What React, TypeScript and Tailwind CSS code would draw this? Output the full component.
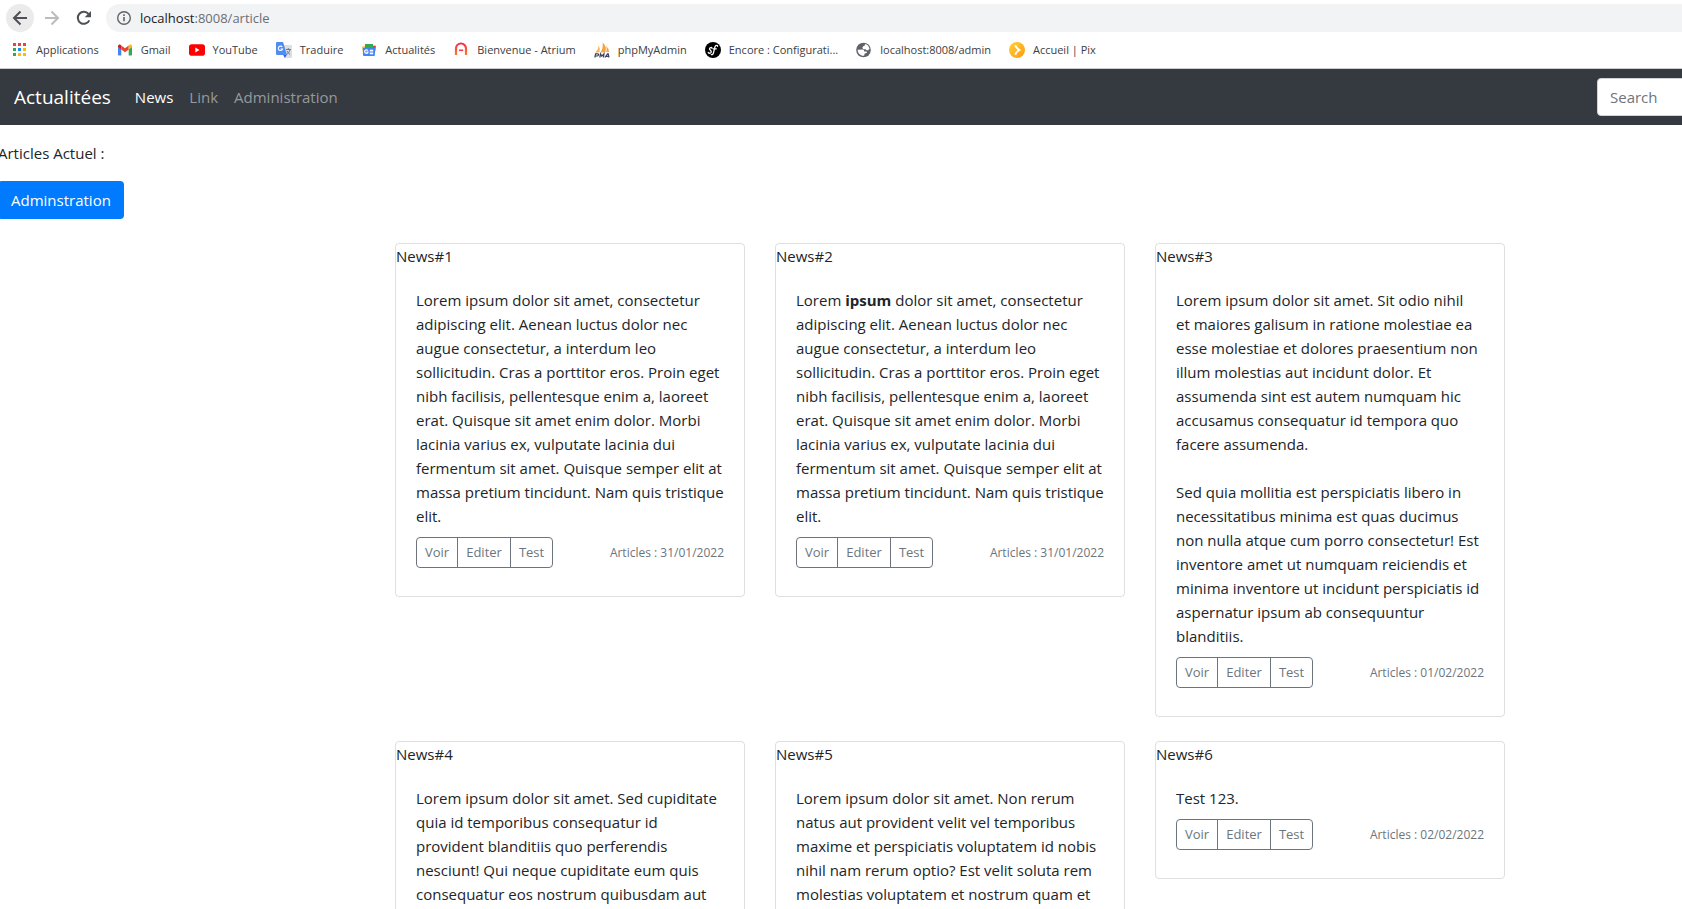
import React from 'react';

const AppsIcon = () => (
  <svg width="16" height="16" viewBox="0 0 16 16" aria-hidden="true" shapeRendering="crispEdges">
    <path fill="#ea4335" d="M1 1h3v3H1zM6 1h3v3H6zM11 1h3v3h-3z" />
    <path fill="#34a853" d="M1 6h3v3H1z" />
    <path fill="#1a8cf0" d="M6 6h3v3H6z" />
    <path fill="#fbbc04" d="M11 6h3v3h-3zM11 11h3v3h-3zM6 11h3v3H6z" />
    <path fill="#34a853" d="M1 11h3v3H1z" />
  </svg>
);

const GmailIcon = () => (
  <svg width="16" height="16" viewBox="0 0 16 16" aria-hidden="true">
    <path fill="#4285f4" d="M1 4.5v8.2q0 .8.8.8h2.5V7.2L1 4.8z" />
    <path fill="#34a853" d="M11.7 13.500h2.500q.8 0 .8-.8V4.800l-3.300 2.400z" />
    <path fill="#ea4335" d="M4.300 3.500 8 6.300l3.700-2.800v3.900L8 10.200 4.300 7.400z" />
    <path fill="#c5221f" d="M1 4.200c0-1.600 1.700-2 2.700-1.200l.6.500v3.900L1 5z" />
    <path fill="#fbbc04" d="M15 4.200c0-1.600-1.700-2-2.700-1.200l-.6.500v3.900L15 5z" />
  </svg>
);

const YouTubeIcon = () => (
  <svg width="16" height="16" viewBox="0 0 16 16" aria-hidden="true">
    <rect y="2.300" width="16" height="11.400" rx="2.800" fill="#f00" />
    <path d="M6.300 5.600v4.800L10.500 8z" fill="#fff" />
  </svg>
);

const TranslateIcon = () => (
  <svg width="16" height="16" viewBox="0 0 16 16" aria-hidden="true">
    <path fill="#dcdfe3" d="M6 3h9q1 0 1 1v11q0 1-1 1H9z" />
    <path fill="#3c5fc9" d="M7 12.500h4L8.800 16z" />
    <path fill="#4f8df5" d="M1 0h6l4 13H1q-1 0-1-1V1q0-1 1-1z" />
    <path fill="none" stroke="#fff" strokeWidth="1.100" d="M6.300 5A2.200 2.200 0 1 0 6.600 7H4.600" />
    <path fill="none" stroke="#6b7c8c" strokeWidth="1" d="M10 7.500h5M12.300 6v1.500M14 7.500c-.5 2.500-2 4-3 4.800M11 9c.8 1.600 2 2.800 3.200 3.600" />
  </svg>
);

const NewsIcon = () => (
  <svg width="16" height="16" viewBox="0 0 16 16" aria-hidden="true">
    <path fill="#fbbc04" d="M1 4.800 9 3l2 4-9 3z" />
    <path fill="#ea4335" d="m10 4 4-.6 1 .8-.8 5.300z" />
    <path fill="#34a853" d="M4 2h8v4H4z" />
    <path fill="#4285f4" d="M1.800 6h12.400l-.3 7q0 1-1 1H3q-1 0-1-1z" />
    <path fill="none" stroke="#fff" strokeWidth="1.200" d="M6.800 8.700a1.700 1.700 0 1 0 .2 1.500H5.500M8.800 8.400h3.400M8.800 10h3.400M8.800 11.600h3.400" />
  </svg>
);

const AtriumIcon = () => (
  <svg width="16" height="16" viewBox="0 0 16 16" aria-hidden="true">
    <defs>
      <linearGradient id="atrium" x1="0" y1="0" x2="0" y2="1">
        <stop offset="0" stopColor="#f0304c" />
        <stop offset="1" stopColor="#ff7a2e" />
      </linearGradient>
    </defs>
    <path fill="none" stroke="url(#atrium)" strokeWidth="2.200" d="M3 13V6.500A5 5 0 0 1 13 6.500V13" />
    <path stroke="#f4434a" strokeWidth="1.700" d="M6 8.300h4.200" />
  </svg>
);

const PmaIcon = () => (
  <svg width="16" height="16" viewBox="0 0 16 16" aria-hidden="true">
    <path fill="#f9a13a" d="M8.500.5Q13 4 11.500 10.300L6.500 10.500Q9.500 6 8.500.5z" />
    <path fill="#f7b560" d="M4.800 3.500Q6.500 7 5.500 10.300L1.200 10.700Q4.500 7.500 4.800 3.500z" />
    <path fill="#f9a13a" d="M12.300 4Q15 6.500 15 10h-2.700q.8-3 0-6z" />
    <path fill="none" stroke="#3f3f63" strokeWidth="1.200" d="M.8 15.500l.8-3.700h2.200q1 0 .8 1T3.200 14H1.300M5.800 15.500l.8-3.700 1.200 2.400 2.200-2.400-.5 3.700M11 15.500l2.500-3.700h.7l.8 3.700M12.200 14.300h2.500" />
  </svg>
);

const SymfonyIcon = () => (
  <svg width="16" height="16" viewBox="0 0 16 16" aria-hidden="true">
    <circle cx="8" cy="8" r="8" fill="#000" />
    <path fill="none" stroke="#fff" strokeWidth="1.300" strokeLinecap="round" d="M7 6.300C7 5 4.300 5.300 4.500 7c.2 1.300 2.300 1.500 1.700 3.200C5.700 11.500 3.300 11.700 3.200 10.300M12.600 4.300c0-1.400-2-1.200-2.600.4-.7 2-1 4.600-1.600 6.300-.4 1.300-1.200 1.900-2 1.600M8.300 6.800h3" />
  </svg>
);

const GlobeIcon = () => (
  <svg width="16" height="16" viewBox="0 0 16 16" aria-hidden="true">
    <circle cx="7.500" cy="8" r="7.300" fill="#5f6368" />
    <path fill="#fff" d="M9 2.100c2.300.5 4 2.200 4.500 4.700l-1.300 1.500h-1.600L9.500 7.200H7.200L6.300 5.500l1-1.300 1.500-.6zM1.600 7.800l4.700-.2c1.300 0 1.900.8 1.900 1.800h2c1 0 1 1.300.2 1.600l-1.700.5-.6 2.300c-3.500.4-6.300-2.300-6.500-6z" />
  </svg>
);

const PixIcon = () => (
  <svg width="16" height="16" viewBox="0 0 16 16" aria-hidden="true">
    <defs>
      <linearGradient id="pix" x1="0" y1="0" x2="1" y2="1">
        <stop offset="0" stopColor="#ffd13a" />
        <stop offset="1" stopColor="#ff9a0c" />
      </linearGradient>
    </defs>
    <circle cx="8" cy="8" r="8" fill="url(#pix)" />
    <path fill="none" stroke="#fff" strokeWidth="2" d="M6.300 3.300q1 3 4 4.700-3 1.700-4 4.700" />
  </svg>
);

const bookmarks = [
  { label: 'Applications', Icon: AppsIcon },
  { label: 'Gmail', Icon: GmailIcon },
  { label: 'YouTube', Icon: YouTubeIcon },
  { label: 'Traduire', Icon: TranslateIcon },
  { label: 'Actualités', Icon: NewsIcon },
  { label: 'Bienvenue - Atrium', Icon: AtriumIcon },
  { label: 'phpMyAdmin', Icon: PmaIcon },
  { label: 'Encore : Configurati...', Icon: SymfonyIcon },
  { label: 'localhost:8008/admin', Icon: GlobeIcon },
  { label: 'Accueil | Pix', Icon: PixIcon },
];

function BrowserBar() {
  return (
    <header className="border-b border-[#c9cbcf] bg-white">
      <div className="flex items-center pt-1 pl-1.5">
        <button aria-label="Retour" className="flex size-7 items-center justify-center rounded-full bg-[#ebebec]">
          <svg width="16" height="16" viewBox="0 0 16 16" fill="none" stroke="#4d5156" strokeWidth="2" aria-hidden="true">
            <path d="M15 8H2.500M8.500 1.500 2 8l6.500 6.500" />
          </svg>
        </button>
        <button aria-label="Avancer" className="ml-1 flex size-7 items-center justify-center">
          <svg width="16" height="16" viewBox="0 0 16 16" fill="none" stroke="#babcbe" strokeWidth="2" aria-hidden="true">
            <path d="M1 8h12.500M7.500 1.500 14 8l-6.500 6.500" />
          </svg>
        </button>
        <button aria-label="Actualiser" className="ml-1 flex size-7 items-center justify-center">
          <svg width="16" height="16" viewBox="0 0 16 16" aria-hidden="true">
            <path fill="none" stroke="#4d5156" strokeWidth="2" d="M13.300 10.300A6 6 0 1 1 12.500 4" />
            <path fill="#4d5156" d="M15 1v6.300H8.700z" />
          </svg>
        </button>
        <div className="ml-2 flex h-7 grow items-center rounded-l-full bg-[#f1f3f4] pl-2.5">
          <svg width="16" height="16" viewBox="0 0 16 16" fill="none" stroke="#5f6368" aria-hidden="true">
            <circle cx="8" cy="8" r="6.300" strokeWidth="1.400" />
            <path strokeWidth="1.600" d="M8 7v4.300M8 4.300v1.600" />
          </svg>
          <a href="#" className="ml-2 text-[13px] leading-5 text-[#6b6f74]">
            <span className="text-[#202124]">localhost</span>:8008/article
          </a>
        </div>
      </div>
      <nav aria-label="Favoris" className="flex h-9 items-center gap-[18px] pl-3">
        {bookmarks.map(({ label, Icon }) => (
          <a key={label} href="#" className="flex shrink-0 items-center gap-2 text-[11px] leading-4 text-[#3c4043]">
            <Icon />
            {label}
          </a>
        ))}
      </nav>
    </header>
  );
}

function Navbar() {
  return (
    <nav className="flex h-14 items-center overflow-hidden bg-[#343a40] pl-3.5 text-[15px]">
      <a href="#" className="text-[19px] leading-8 text-white">Actualitées</a>
      <div className="ml-6 flex gap-4">
        <a href="#" className="text-white">News</a>
        <a href="#" className="text-[#96999c]">Link</a>
        <a href="#" className="text-[#96999c]">Administration</a>
      </div>
      <form className="-mr-32 ml-auto">
        <input
          type="search"
          aria-label="Search"
          placeholder="Search"
          className="h-[38px] w-[213px] rounded border border-[#ced4da] bg-white px-3 placeholder:text-[#6c757d]"
        />
      </form>
    </nav>
  );
}

const articles: { id: number; date: string; body: React.ReactNode }[] = [
  {
    id: 1,
    date: '31/01/2022',
    body: 'Lorem ipsum dolor sit amet, consectetur adipiscing elit. Aenean luctus dolor nec augue consectetur, a interdum leo sollicitudin. Cras a porttitor eros. Proin eget nibh facilisis, pellentesque enim a, laoreet erat. Quisque sit amet enim dolor. Morbi lacinia varius ex, vulputate lacinia dui fermentum sit amet. Quisque semper elit at massa pretium tincidunt. Nam quis tristique elit.',
  },
  {
    id: 2,
    date: '31/01/2022',
    body: (
      <>
        Lorem <strong>ipsum</strong> dolor sit amet, consectetur adipiscing elit. Aenean luctus dolor nec augue
        consectetur, a interdum leo sollicitudin. Cras a porttitor eros. Proin eget nibh facilisis, pellentesque enim
        a, laoreet erat. Quisque sit amet enim dolor. Morbi lacinia varius ex, vulputate lacinia dui fermentum sit
        amet. Quisque semper elit at massa pretium tincidunt. Nam quis tristique elit.
      </>
    ),
  },
  {
    id: 3,
    date: '01/02/2022',
    body: (
      <>
        Lorem ipsum dolor sit amet. Sit odio nihil et&nbsp;maiores galisum in ratione molestiae ea esse molestiae et
        dolores praesentium non illum molestias aut incidunt dolor. Et assumenda sint est autem numquam hic accusamus
        consequatur id tempora quo facere assumenda.
        <br />
        <br />
        Sed quia mollitia est perspiciatis libero in necessitatibus minima est quas ducimus non nulla atque cum porro
        consectetur! Est inventore amet ut numquam reiciendis et minima inventore ut incidunt perspiciatis id
        aspernatur ipsum ab consequuntur blanditiis.
      </>
    ),
  },
  {
    id: 4,
    date: '01/02/2022',
    body: 'Lorem ipsum dolor sit amet. Sed cupiditate quia id temporibus consequatur id provident blanditiis quo perferendis nesciunt! Qui neque cupiditate eum quis consequatur eos nostrum quibusdam aut',
  },
  {
    id: 5,
    date: '01/02/2022',
    body: 'Lorem ipsum dolor sit amet. Non rerum natus aut provident velit vel temporibus maxime et perspiciatis voluptatem id nobis nihil nam rerum optio? Est velit soluta rem molestias voluptatem et nostrum quam et',
  },
  { id: 6, date: '02/02/2022', body: 'Test 123.' },
];

function ArticleCard({ id, date, body }: (typeof articles)[number]) {
  return (
    <article className="rounded border border-[#dfdfdf] bg-white">
      <h2>{`News#${id}`}</h2>
      <div className="p-5">
        <p>{body}</p>
        <div className="mt-[9px] mb-2 flex items-center justify-between">
          <div className="flex divide-x divide-[#6c757d] rounded border border-[#6c757d] text-[13px] leading-[21px] text-[#6c757d]">
            <button className="px-2 py-1">Voir</button>
            <button className="px-2 py-1">Editer</button>
            <button className="px-2 py-1">Test</button>
          </div>
          <small className="text-[12px] text-[#6c757d]">{`Articles : ${date}`}</small>
        </div>
      </div>
    </article>
  );
}

export default function App() {
  return (
    <div className="h-screen overflow-hidden bg-white font-['Open_Sans','Noto_Sans',sans-serif] text-[15px] leading-6 text-[#212529]">
      <BrowserBar />
      <Navbar />
      <main className="pt-4">
        <div className="-ml-0.5">
          <p>Articles Actuel :</p>
          <button className="mt-4 h-[38px] rounded bg-[#007bff] px-[13px] text-white">Adminstration</button>
        </div>
        <div className="mt-6 flex justify-center pl-[218px]">
          <div className="grid w-full max-w-[1110px] grid-cols-3 items-start gap-x-[30px] gap-y-6">
            {articles.map((article) => (
              <ArticleCard key={article.id} {...article} />
            ))}
          </div>
        </div>
      </main>
    </div>
  );
}
